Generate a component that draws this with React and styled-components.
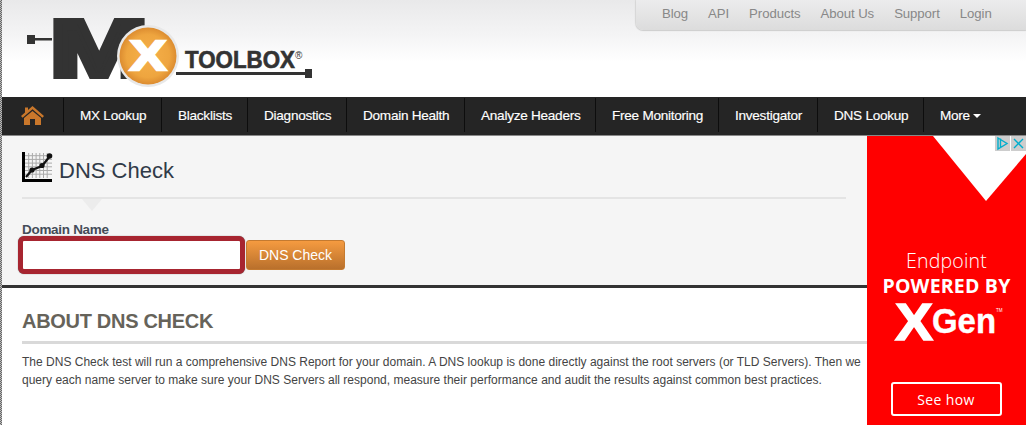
import React from "react";
import styled, { createGlobalStyle } from "styled-components";

const Global = createGlobalStyle`
  html, body { margin: 0; padding: 0; background: #fff; overflow: hidden; }
  body { font-family: "Liberation Sans", Arial, sans-serif; }
  * { box-sizing: border-box; }
`;
const Page = styled.div`
  width: 1026px; height: 425px; overflow: hidden; padding-left: 2px;
  background-color: #fff;
  background-image: repeating-conic-gradient(#666 0 25%, #bbb 0 50%);
  background-size: 2px 2px; background-repeat: repeat-y;
`;
const Header = styled.header`
  height: 97px; display: flex; justify-content: space-between; align-items: flex-start;
  background: linear-gradient(#e9e9ea 0, #f4f4f5 35px, #ffffff 62px);
`;
const LogoWrap = styled.div`
  width: 320px; height: 90px; margin-left: 22px; flex: none;
`;
const LogoSvg = styled.svg`
  display: block; overflow: visible;
`;
const TopTabs = styled.nav`
  width: 390px; height: 30px; display: flex; align-items: center; gap: 20px; padding: 0 0 3px 26px;
  background: linear-gradient(#ececed, #dcdcdc); border-radius: 0 0 0 7px;
  box-shadow: 0 1px 1px #ccc, -1px 0 1px #d8d8d8;
`;
const TopLink = styled.a`
  font-size: 13.2px; color: #888; white-space: nowrap; letter-spacing: -.08px;
`;
const NavBar = styled.nav`
  height: 38px; background: #252525; display: flex; align-items: stretch; padding-top: 1px;
  padding-bottom: 3px;
`;
const NavItem = styled.a`
  display: flex; align-items: center; gap: 3px; padding: 0 16px; color: #fff;
  font-size: 13.6px; letter-spacing: -.27px; white-space: nowrap;
  border-right: ${p => (p.$last ? "0" : "1px solid #0d0d0d")};
  -webkit-text-stroke: .15px #fff; width: ${p => p.$w}px; flex: none;
`;
const HomeItem = styled(NavItem)`
  padding: 0 0 0 19px; -webkit-text-stroke: 0;
`;
const Caret = styled.span`
  width: 0; height: 0; border: 4px solid transparent; border-top-color: #fff; border-bottom: 0; margin-top: 1px;
`;
const Body = styled.div`
  display: flex; align-items: stretch; height: 290px; border-top: 1px solid #888;
`;
const Main = styled.main`
  width: 865px; flex: none;
`;
const ToolPanel = styled.section`
  height: 152px; background: #f5f5f5; border-bottom: 3px solid #333; padding: 15px 21px 0 20px;
`;
const TitleRow = styled.div`
  display: flex; align-items: flex-start; gap: 6px; height: 46px;
`;
const Title = styled.h1`
  margin: 3px 0 0; font-size: 22px; line-height: 34px; font-weight: 400; color: #303a48;
`;
const Rule = styled.div`
  height: 2px; background: #e4e4e4; position: relative;
`;
const Notch = styled.span`
  position: absolute; left: 60px; top: 2px; width: 0; height: 0;
  border-left: 10px solid transparent; border-right: 10px solid transparent; border-top: 12px solid #ececec;
`;
const Label = styled.label`
  display: block; margin-top: 23px; font-size: 13.5px; line-height: 16px; font-weight: 700; color: #444c58;
  letter-spacing: -.3px;
`;
const FormRow = styled.div`
  display: flex; align-items: center; gap: 1px; margin: -2px 0 0 -4px;
`;
const DomainInput = styled.input`
  width: 227px; height: 38px; border: 5px solid #a72530; border-radius: 6px; background: #fff; outline: none;
  box-shadow: 0 0 1px #555;
`;
const CheckButton = styled.button`
  width: 99px; height: 30px; padding: 0; border: 1px solid #c47a30; border-radius: 3px;
  background: linear-gradient(#f59b40, #b9702c); color: #fff; font: 14px "Liberation Sans", Arial, sans-serif;
`;
const About = styled.section`
  padding: 21px 0 0 20px;
`;
const AboutTitle = styled.h2`
  margin: 0; font-size: 20px; line-height: 24px; font-weight: 700; color: #66635a; letter-spacing: -.3px;
`;
const AboutRule = styled.div`
  height: 3px; background: #d9d9d9; margin-top: 8px;
`;
const Para = styled.p`
  margin: 9px 0 0; width: 845px; font-size: 12px; line-height: 18px; color: #444; letter-spacing: .01px;
`;
const Ad = styled.aside`
  width: 159px; flex: none; height: 289px; background: #f00; position: relative; color: #fff;
  display: flex; flex-direction: column; align-items: center; overflow: hidden;
`;
const AdShape = styled.svg`
  position: absolute; left: 0; top: 0;
`;
const AdBadge = styled.div`
  position: absolute; right: 0; top: 0; display: flex; gap: 1px;
`;
const BadgeCell = styled.span`
  width: 15px; height: 15px; background: #cdcdcd; display: block;
`;
const Endpoint = styled.div`
  margin-top: 112px; font-size: 19.5px; line-height: 26px; font-family: "Open Sans", sans-serif; font-weight: 300;
  letter-spacing: .2px;
`;
const Powered = styled.div`
  font-size: 19.5px; line-height: 24px; font-weight: 700; font-family: "Open Sans", sans-serif; letter-spacing: .2px;
`;
const XGen = styled.svg`
  margin-top: 3px; display: block; overflow: visible;
`;
const SeeHow = styled.a`
  margin-top: 37px; margin-right: 1px; width: 111px; height: 34px; border: 2px solid #fff; border-radius: 3px; display: flex;
  align-items: center; justify-content: center; font-size: 14px; font-family: "Open Sans", sans-serif; font-weight: 500;
  letter-spacing: .4px;
`;

function Logo() {
  return (
    <LogoSvg width="320" height="90" viewBox="0 0 320 90">
      <defs>
        <radialGradient id="orb">
          <stop offset="0" stopColor="#f6b04a" />
          <stop offset=".75" stopColor="#eea53f" />
          <stop offset="1" stopColor="#dc8c30" />
        </radialGradient>
      </defs>
      <rect x="3" y="35" width="8" height="9" fill="#333" />
      <rect x="10" y="38" width="18" height="2.5" fill="#333" />
      <text x="26" y="76" fontFamily="Liberation Sans" fontWeight="700" fontSize="79" fill="#333" stroke="#333" strokeWidth="6" textLength="98" lengthAdjust="spacingAndGlyphs">M</text>
      <circle cx="124" cy="56" r="31" fill="#e8e8e8" />
      <circle cx="124" cy="56" r="28.5" fill="url(#orb)" />
      <text x="106" y="70" fontFamily="Liberation Sans" fontWeight="700" fontSize="42" fill="#fff" stroke="#fff" strokeWidth="2.5" textLength="36" lengthAdjust="spacingAndGlyphs">X</text>
      <text x="161" y="68" fontFamily="Liberation Sans" fontWeight="700" fontSize="23" fill="#333" stroke="#333" strokeWidth=".6" textLength="110" lengthAdjust="spacingAndGlyphs">TOOLBOX</text>
      <text x="271" y="59" fontFamily="Liberation Sans" fontSize="10" fill="#333">®</text>
      <rect x="152" y="72" width="131" height="3" fill="#333" />
      <rect x="281" y="69" width="7" height="9" fill="#333" />
    </LogoSvg>
  );
}

function HomeIcon() {
  return (
    <svg width="23" height="19" viewBox="0 0 23 19" fill="#c9772b">
      <path d="M11.5 0 L23 10 L21.4 11.7 L11.5 3.3 L1.6 11.7 L0 10 L4 6.5 V1.5 H7 V3.9 Z" />
      <path d="M11.5 5 L20 12 V19 H14 V13 H9 V19 H3 V12 Z" />
    </svg>
  );
}

function ChartIcon() {
  const grid = [];
  for (let i = 1; i < 7; i++) {
    grid.push(<path key={"v" + i} d={`M${3 + i * 3.7} 1V26`} stroke="#aaa" strokeWidth="1" />);
    grid.push(<path key={"h" + i} d={`M3 ${i * 3.7}H30`} stroke="#aaa" strokeWidth="1" />);
  }
  return (
    <svg width="31" height="30" viewBox="0 0 31 30" style={{ flex: "none", marginTop: 1 }}>
      {grid}
      <path d="M1.5 0V28.5H30" fill="none" stroke="#000" strokeWidth="3" />
      <path d="M4 25L10 18L20 14L28 4" fill="none" stroke="#111" strokeWidth="2.2" />
      <circle cx="10" cy="18" r="2.6" fill="#111" />
      <circle cx="20" cy="13.5" r="2.6" fill="#111" />
      <circle cx="27.5" cy="4" r="2.8" fill="#111" />
    </svg>
  );
}

const navItems = [
  ["MX Lookup", 98], ["Blacklists", 86], ["Diagnostics", 99], ["Domain Health", 118],
  ["Analyze Headers", 131], ["Free Monitoring", 123], ["Investigator", 99], ["DNS Lookup", 106],
];

export default function App() {
  return (
    <Page>
      <Global />
      <Header>
        <LogoWrap><Logo /></LogoWrap>
        <TopTabs>
          {["Blog", "API", "Products", "About Us", "Support", "Login"].map(t => <TopLink key={t}>{t}</TopLink>)}
        </TopTabs>
      </Header>
      <NavBar>
        <HomeItem $w={62}><HomeIcon /></HomeItem>
        {navItems.map(([t, w]) => <NavItem key={t} $w={w}>{t}</NavItem>)}
        <NavItem $last>More <Caret /></NavItem>
      </NavBar>
      <Body>
        <Main>
          <ToolPanel>
            <TitleRow>
              <ChartIcon />
              <Title>DNS Check</Title>
            </TitleRow>
            <Rule><Notch /></Rule>
            <Label>Domain Name</Label>
            <FormRow>
              <DomainInput />
              <CheckButton>DNS Check</CheckButton>
            </FormRow>
          </ToolPanel>
          <About>
            <AboutTitle>ABOUT DNS CHECK</AboutTitle>
            <AboutRule />
            <Para>The DNS Check test will run a comprehensive DNS Report for your domain. A DNS lookup is done directly against the root servers (or TLD Servers). Then we query each name server to make sure your DNS Servers all respond, measure their performance and audit the results against common best practices.</Para>
          </About>
        </Main>
        <Ad>
          <AdShape width="159" height="80" viewBox="0 0 159 80">
            <path d="M66 0 L119 65 L159 18 V0 Z" fill="#fff" />
          </AdShape>
          <AdBadge>
            <BadgeCell>
              <svg width="15" height="15" viewBox="0 0 15 15"><path d="M3 2L12 7.5L3 13Z M5.5 2.5V11" fill="none" stroke="#00aecd" strokeWidth="1.4" /></svg>
            </BadgeCell>
            <BadgeCell>
              <svg width="15" height="15" viewBox="0 0 15 15"><path d="M3 3L12 12M12 3L3 12" fill="none" stroke="#00aecd" strokeWidth="1.4" /></svg>
            </BadgeCell>
          </AdBadge>
          <Endpoint>Endpoint</Endpoint>
          <Powered>POWERED BY</Powered>
          <XGen width="112" height="44" viewBox="0 0 112 44">
            <text x="4" y="39" fontFamily="Liberation Sans" fontWeight="700" fontSize="52" fill="#fff" stroke="#fff" strokeWidth="1.5" textLength="38" lengthAdjust="spacingAndGlyphs">X</text>
            <text x="41" y="32" fontFamily="Liberation Sans" fontWeight="700" fontSize="35" fill="#fff" stroke="#fff" strokeWidth=".4" textLength="64" lengthAdjust="spacingAndGlyphs">Gen</text>
            <text x="105" y="11" fontFamily="Liberation Sans" fontSize="4.5" fill="#fff">TM</text>
          </XGen>
          <SeeHow>See how</SeeHow>
        </Ad>
      </Body>
    </Page>
  );
}
